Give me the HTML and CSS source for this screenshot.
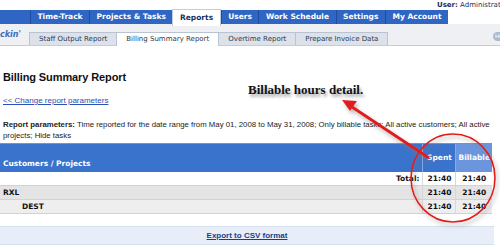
FILE: index.html
```html
<!DOCTYPE html>
<html lang="en">
<head>
    <meta charset="UTF-8">
    <title>Billing Summary Report</title>
    <link rel="stylesheet" href="styles.css">
</head>
<body>
    <div class="userbar"><b>User:</b> Administrator</div>

    <div class="topnav">
        <ul class="tabs">
            <li>Time-Track</li>
            <li>Projects &amp; Tasks</li>
            <li class="active">Reports</li>
            <li>Users</li>
            <li>Work Schedule</li>
            <li>Settings</li>
            <li>My Account</li>
        </ul>
    </div>

    <div class="subnav">
        <span class="logo">ckin'</span>
        <ul class="subtabs">
            <li>Staff Output Report</li>
            <li class="active">Billing Summary Report</li>
            <li>Overtime Report</li>
            <li>Prepare Invoice Data</li>
        </ul>
        <span class="help">Help</span>
    </div>

    <div class="content">
        <h1 class="title">Billing Summary Report</h1>
        <a class="back" href="#">&lt;&lt; Change report parameters</a>
        <p class="params"><b>Report parameters:</b> Time reported for the date range from May 01, 2008 to May 31, 2008; Only billable tasks; All active customers; All active projects; Hide tasks</p>
    </div>

    <table class="report">
        <thead>
            <tr>
                <th class="name">Customers / Projects</th>
                <th class="num">Spent</th>
                <th class="num billable">Billable</th>
            </tr>
        </thead>
        <tbody>
            <tr class="total">
                <td class="name">Total:</td>
                <td class="num">21:40</td>
                <td class="num">21:40</td>
            </tr>
            <tr class="customer">
                <td class="name">RXL</td>
                <td class="num">21:40</td>
                <td class="num">21:40</td>
            </tr>
            <tr class="project">
                <td class="name">DEST</td>
                <td class="num">21:40</td>
                <td class="num">21:40</td>
            </tr>
        </tbody>
    </table>

    <div class="export"><a href="#">Export to CSV format</a></div>

    <!-- annotation layer -->
    <div class="note">Billable hours detail.</div>
    <svg class="callout" width="500" height="249" viewBox="0 0 500 249">
        <defs>
            <filter id="shade" x="-20%" y="-20%" width="140%" height="140%">
                <feDropShadow dx="2" dy="3" stdDeviation="2" flood-color="#777" flood-opacity="0.55"/>
            </filter>
        </defs>
        <g filter="url(#shade)" fill="none" stroke="#e21d1d">
            <ellipse cx="453" cy="178" rx="42" ry="44" stroke-width="1.6"/>
            <line x1="429" y1="158" x2="352" y2="107" stroke-width="3"/>
            <polygon points="342,100 357,101 350,111" fill="#e21d1d" stroke="none"/>
        </g>
    </svg>
</body>
</html>
```

FILE: styles.css
```css
body {
    margin: 0;
    width: 500px;
    height: 249px;
    overflow: hidden;
    position: relative;
    background: #fff;
    font-family: 'Liberation Sans', Arial, sans-serif;
    color: #111;
}
ul {
    margin: 0;
    padding: 0;
    list-style: none;
}
.userbar {
    height: 10px;
    padding-left: 437px;
    font-family: 'DejaVu Sans', Verdana, sans-serif;
    font-size: 7px;
    line-height: 10px;
    color: #1c2f5e;
    white-space: nowrap;
    overflow: hidden;
}
.topnav {
    height: 14px;
    display: flex;
}
.tabs {
    display: flex;
    padding-left: 30px;
    background: #3066c3;
}
.tabs li {
    padding: 0 6.5px;
    font-family: 'DejaVu Sans', Verdana, sans-serif;
    font-weight: bold;
    font-size: 7.5px;
    line-height: 14px;
    color: #fff;
    border-left: 1px solid #1f4c9c;
}
.tabs li.active {
    background: #fff;
    color: #1b2f5c;
    margin-top: -1px;
    line-height: 16px;
    height: 16px;
    border: 1px solid #c4ccd8;
    border-bottom: none;
    position: relative;
    z-index: 1;
}
.subnav {
    height: 21px;
    display: flex;
    align-items: flex-end;
    background: #eef0f4;
    border-bottom: 1px solid #c3ccda;
}
.logo {
    align-self: center;
    width: 29px;
    font-family: 'DejaVu Sans', Verdana, sans-serif;
    font-weight: bold;
    font-style: italic;
    font-size: 8px;
    color: #3a6cc0;
}
.subtabs {
    display: flex;
    flex: 1;
    margin-bottom: -1px;
}
.subtabs li {
    height: 12px;
    padding: 0 9px;
    font-family: 'DejaVu Sans', Verdana, sans-serif;
    font-size: 7px;
    line-height: 12px;
    color: #2d3a4f;
    background: #dde2ea;
    border: 1px solid #b9c3d2;
    border-bottom: none;
    margin-right: -1px;
}
.subtabs li.active {
    background: #fff;
    height: 13px;
}
.help {
    align-self: center;
    margin-top: 3px;
    width: 5px;
    height: 9px;
    border-radius: 5px 0 0 5px;
    background: #a8b9d3;
    color: #fff;
    font-size: 6px;
    line-height: 9px;
    padding-left: 2px;
    overflow: hidden;
}
.content {
    padding: 0 3px;
}
.title {
    margin: 25px 0 12px;
    font-size: 11px;
    font-weight: bold;
    line-height: 13px;
    letter-spacing: -0.1px;
}
.back {
    display: block;
    font-size: 8px;
    line-height: 10px;
    color: #2a4fb8;
}
.params {
    margin: 14px 0 2px;
    font-size: 7.8px;
    line-height: 10.5px;
    color: #222;
}
.report {
    width: 492px;
    border-collapse: collapse;
    font-family: 'DejaVu Sans', Verdana, sans-serif;
    font-size: 7.5px;
    font-weight: bold;
}
.report th {
    height: 24px;
    padding: 0 3px 4px;
    background: #3a73cc;
    border-top: 1px solid #6d95d8;
    color: #fff;
    text-align: left;
    vertical-align: bottom;
}
.report th.num {
    text-align: center;
    vertical-align: middle;
    padding: 0 2px 2px;
    border-left: 1px solid #8aaae0;
}
.report th.billable {
    background: #6b96dd;
}
.report td {
    height: 13px;
    padding: 0 3px;
    border-bottom: 1px solid #d2d2d2;
    color: #111;
}
.report td.num {
    text-align: center;
    width: 26px;
    border-left: 1px solid #d8d8d8;
}
.report td.num + td.num {
    width: 28px;
}
.total td.name {
    text-align: right;
}
.customer td {
    background: #e4e4e4;
}
.project td {
    background: #eeeeee;
}
.project td.name {
    padding-left: 22px;
}
.export {
    width: 494px;
    margin-top: 12px;
    height: 17px;
    background: #e8eef8;
    border-top: 1px solid #d6dfee;
    border-bottom: 1px solid #d6dfee;
    text-align: center;
    font-size: 8px;
    line-height: 17px;
}
.export a {
    color: #1a3f8a;
    font-weight: bold;
}
.note {
    position: absolute;
    left: 248px;
    top: 82px;
    font-family: 'Liberation Serif', 'Times New Roman', serif;
    font-size: 13px;
    font-weight: bold;
    color: #111;
    text-shadow: 2px 3px 3px rgba(0, 0, 0, 0.35);
}
.callout {
    position: absolute;
    left: 0;
    top: 0;
    pointer-events: none;
}
```
